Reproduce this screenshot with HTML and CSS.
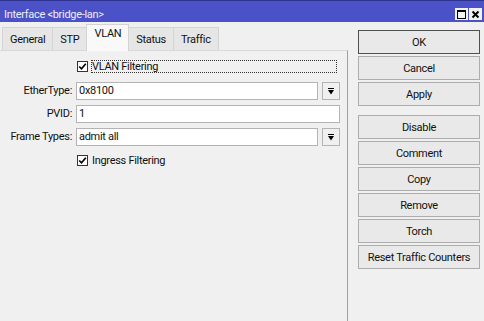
FILE: index.html
```html
<!DOCTYPE html>
<html lang="en">
<head>
    <meta charset="UTF-8">
    <title>Interface &lt;bridge-lan&gt;</title>
    <link rel="stylesheet" href="styles.css">
</head>
<body>
    <div class="window">
        <div class="titlebar">
            <span class="title">Interface &lt;bridge-lan&gt;</span>
            <div class="title-buttons">
                <span class="tb-btn">
                    <svg width="11" height="11" viewBox="0 0 11 11"><rect x="1.5" y="1.5" width="8" height="8" fill="none" stroke="#000" stroke-width="1"/><rect x="1" y="1" width="9" height="2" fill="#000"/></svg>
                </span>
                <span class="tb-btn">
                    <svg width="11" height="11" viewBox="0 0 11 11"><path d="M2.5 2.5 L8.5 8.5 M8.5 2.5 L2.5 8.5" stroke="#000" stroke-width="2"/></svg>
                </span>
            </div>
        </div>

        <div class="main">
            <div class="left">
                <div class="tabs">
                    <div class="tab">General</div>
                    <div class="tab">STP</div>
                    <div class="tab active">VLAN</div>
                    <div class="tab">Status</div>
                    <div class="tab">Traffic</div>
                </div>

                <div class="panel">
                    <div class="form">
                        <div class="field check-field first">
                            <span class="checkbox"><svg width="9" height="9" viewBox="0 0 9 9"><path d="M1.2 4.5 L3.5 6.8 L7.8 1.8" fill="none" stroke="#000" stroke-width="1.7"/></svg></span>
                            <span class="check-label focused">VLAN Filtering</span>
                        </div>

                        <label class="label">EtherType:</label>
                        <div class="field">
                            <div class="input">0x8100</div>
                            <span class="drop"><svg width="6" height="7" viewBox="0 0 6 7"><rect x="0" y="0" width="6" height="1" fill="#000"/><path d="M0 2 L6 2 L3 6.5 Z" fill="#000"/></svg></span>
                        </div>

                        <label class="label">PVID:</label>
                        <div class="field">
                            <div class="input">1</div>
                        </div>

                        <label class="label">Frame Types:</label>
                        <div class="field">
                            <div class="input">admit all</div>
                            <span class="drop"><svg width="6" height="7" viewBox="0 0 6 7"><rect x="0" y="0" width="6" height="1" fill="#000"/><path d="M0 2 L6 2 L3 6.5 Z" fill="#000"/></svg></span>
                        </div>

                        <div class="field check-field">
                            <span class="checkbox"><svg width="9" height="9" viewBox="0 0 9 9"><path d="M1.2 4.5 L3.5 6.8 L7.8 1.8" fill="none" stroke="#000" stroke-width="1.7"/></svg></span>
                            <span class="check-label">Ingress Filtering</span>
                        </div>
                    </div>
                </div>
            </div>

            <div class="actions">
                <button class="btn default">OK</button>
                <button class="btn">Cancel</button>
                <button class="btn">Apply</button>
                <button class="btn spaced">Disable</button>
                <button class="btn">Comment</button>
                <button class="btn">Copy</button>
                <button class="btn">Remove</button>
                <button class="btn">Torch</button>
                <button class="btn">Reset Traffic Counters</button>
            </div>
        </div>
    </div>
</body>
</html>
```

FILE: styles.css
```css
body {
    margin: 0;
    padding: 0;
    background-color: #f0f0f0;
    font-family: Roboto, "Liberation Sans", Arial, sans-serif;
    font-size: 11px;
    letter-spacing: -0.3px;
    color: #111;
}

.window {
    width: 484px;
    height: 321px;
    display: flex;
    flex-direction: column;
    overflow: hidden;
}

.titlebar {
    height: 22px;
    box-sizing: border-box;
    border-top: 1px solid #2f3390;
    background-color: #4b51c6;
    display: flex;
    align-items: center;
    justify-content: space-between;
    padding: 5px 2px 0 4px;
}

.title {
    color: #eeeefa;
}

.title-buttons {
    display: flex;
    gap: 1px;
}

.tb-btn {
    width: 13px;
    height: 12px;
    background-color: #f2f2f2;
    display: flex;
    align-items: center;
    justify-content: center;
}

.main {
    flex: 1;
    display: flex;
}

.left {
    width: 348px;
    display: flex;
    flex-direction: column;
}

.tabs {
    height: 28px;
    display: flex;
    align-items: flex-end;
    padding-left: 2px;
}

.tab {
    height: 23px;
    box-sizing: border-box;
    padding: 5px 7px 0;
    line-height: 14px;
    background-color: #e6e6e6;
    border: 1px solid #d4d4d4;
    border-bottom: none;
    margin-right: -1px;
}

.tab.active {
    height: 27px;
    padding-top: 2px;
    background-color: #f9f9f9;
    position: relative;
    margin-bottom: -1px;
    z-index: 1;
}

.panel {
    flex: 1;
    border-top: 1px solid #d9d9d9;
    border-right: 1px solid #a0a0a0;
}

.form {
    display: grid;
    grid-template-columns: 73px 264px;
    grid-template-rows: repeat(5, 18px);
    column-gap: 3px;
    row-gap: 5px;
    padding-top: 8px;
}

.label {
    text-align: right;
    padding-right: 1px;
    line-height: 18px;
}

.field {
    grid-column: 2;
    display: flex;
    gap: 4px;
}

.check-field {
    align-items: center;
    gap: 3px;
    padding-left: 1px;
}

.check-field.first {
    align-items: flex-start;
    padding-top: 1px;
}

.checkbox {
    width: 11px;
    height: 11px;
    box-sizing: border-box;
    border: 1px solid #333;
    background-color: #fff;
    display: flex;
    align-items: center;
    justify-content: center;
    margin-top: 1px;
}

.check-label {
    line-height: 13px;
    padding: 0 1px;
}

.check-label.focused {
    flex: 1;
    margin-right: 3px;
    outline: 1px dotted #333;
    outline-offset: -1px;
}

.input {
    flex: 1;
    height: 18px;
    box-sizing: border-box;
    background-color: #fff;
    border: 1px solid #b4b4b4;
    padding-left: 2px;
    line-height: 16px;
}

.drop {
    width: 18px;
    height: 18px;
    box-sizing: border-box;
    border: 1px solid #b4b4b4;
    background-color: #f0f0f0;
    display: flex;
    align-items: center;
    justify-content: center;
}

.actions {
    flex: 1;
    display: flex;
    flex-direction: column;
    padding: 8px 0 0 10px;
}

.btn {
    width: 122px;
    height: 24px;
    margin-bottom: 2px;
    border: 1px solid #adadad;
    background-color: #e9e9e9;
    font-family: Roboto, "Liberation Sans", Arial, sans-serif;
    font-size: 11px;
    letter-spacing: -0.3px;
    color: #111;
    padding: 0;
}

.btn.default {
    border-color: #505050;
}

.btn.spaced {
    margin-top: 7px;
}
```
